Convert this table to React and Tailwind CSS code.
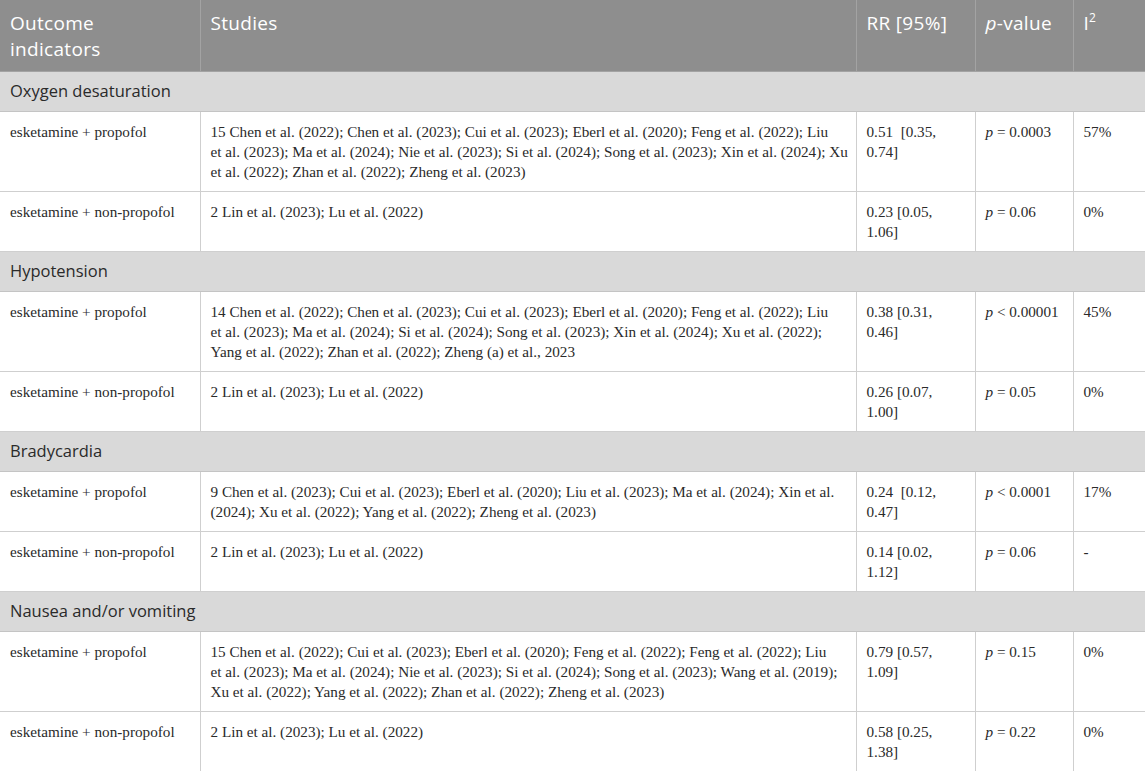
import React from "react";

const serif = { fontFamily: '"Liberation Serif", "Times New Roman", serif' };

const sections = [
  {
    title: "Oxygen desaturation",
    rows: [
      {
        a: "esketamine + propofol",
        s: [
          "15 Chen et al. (2022); Chen et al. (2023); Cui et al. (2023); Eberl et al. (2020); Feng et al. (2022); Liu",
          "et al. (2023); Ma et al. (2024); Nie et al. (2023); Si et al. (2024); Song et al. (2023); Xin et al. (2024); Xu",
          "et al. (2022); Zhan et al. (2022); Zheng et al. (2023)",
        ],
        rr: ["0.51\u00a0 [0.35,", "0.74]"],
        op: "=",
        p: "0.0003",
        i: "57%",
      },
      {
        a: "esketamine + non-propofol",
        s: ["2 Lin et al. (2023); Lu et al. (2022)"],
        rr: ["0.23 [0.05,", "1.06]"],
        op: "=",
        p: "0.06",
        i: "0%",
      },
    ],
  },
  {
    title: "Hypotension",
    rows: [
      {
        a: "esketamine + propofol",
        s: [
          "14 Chen et al. (2022); Chen et al. (2023); Cui et al. (2023); Eberl et al. (2020); Feng et al. (2022); Liu",
          "et al. (2023); Ma et al. (2024); Si et al. (2024); Song et al. (2023); Xin et al. (2024); Xu et al. (2022);",
          "Yang et al. (2022); Zhan et al. (2022); Zheng (a) et al., 2023",
        ],
        rr: ["0.38 [0.31,", "0.46]"],
        op: "<",
        p: "0.00001",
        i: "45%",
      },
      {
        a: "esketamine + non-propofol",
        s: ["2 Lin et al. (2023); Lu et al. (2022)"],
        rr: ["0.26 [0.07,", "1.00]"],
        op: "=",
        p: "0.05",
        i: "0%",
      },
    ],
  },
  {
    title: "Bradycardia",
    rows: [
      {
        a: "esketamine + propofol",
        s: [
          "9 Chen et al. (2023); Cui et al. (2023); Eberl et al. (2020); Liu et al. (2023); Ma et al. (2024); Xin et al.",
          "(2024); Xu et al. (2022); Yang et al. (2022); Zheng et al. (2023)",
        ],
        rr: ["0.24\u00a0 [0.12,", "0.47]"],
        op: "<",
        p: "0.0001",
        i: "17%",
      },
      {
        a: "esketamine + non-propofol",
        s: ["2 Lin et al. (2023); Lu et al. (2022)"],
        rr: ["0.14 [0.02,", "1.12]"],
        op: "=",
        p: "0.06",
        i: "-",
      },
    ],
  },
  {
    title: "Nausea and/or vomiting",
    rows: [
      {
        a: "esketamine + propofol",
        s: [
          "15 Chen et al. (2022); Cui et al. (2023); Eberl et al. (2020); Feng et al. (2022); Feng et al. (2022); Liu",
          "et al. (2023); Ma et al. (2024); Nie et al. (2023); Si et al. (2024); Song et al. (2023); Wang et al. (2019);",
          "Xu et al. (2022); Yang et al. (2022); Zhan et al. (2022); Zheng et al. (2023)",
        ],
        rr: ["0.79 [0.57,", "1.09]"],
        op: "=",
        p: "0.15",
        i: "0%",
      },
      {
        a: "esketamine + non-propofol",
        s: ["2 Lin et al. (2023); Lu et al. (2022)"],
        rr: ["0.58 [0.25,", "1.38]"],
        op: "=",
        p: "0.22",
        i: "0%",
      },
    ],
  },
];

function Lines({ lines }) {
  return lines.map((l, k) => (
    <div key={k} className="whitespace-pre">
      {l}
    </div>
  ));
}

export default function App() {
  const cell =
    "border border-[#cfcfcf] px-[10px] pt-[10px] pb-[9px] align-top text-[15.2px] leading-[20px] text-[#2a2a2a]";
  const head =
    "border border-[#a3a3a3] px-[10px] pt-[10px] align-top text-left font-normal text-[19px] leading-[26px] tracking-[0.3px] text-white";
  return (
    <div className="w-[1145px] h-[772px] bg-white overflow-hidden">
      <table
        className="w-[1145px] border-collapse table-fixed border-hidden"
        style={{ fontFamily: '"Open Sans", sans-serif' }}
      >
        <colgroup>
          <col className="w-[200px]" />
          <col className="w-[656px]" />
          <col className="w-[119px]" />
          <col className="w-[98px]" />
          <col className="w-[72px]" />
        </colgroup>
        <thead>
          <tr className="bg-[#8e8e8e] h-[71px]">
            <th className={head}>
              <div>Outcome</div>
              <div>indicators</div>
            </th>
            <th className={head}>Studies</th>
            <th className={head}>RR [95%]</th>
            <th className={head}>
              <i>p</i>-value
            </th>
            <th className={head}>
              I<sup className="text-[12px] top-[-0.7em]">2</sup>
            </th>
          </tr>
        </thead>
        <tbody>
          {sections.map((sec) => (
            <React.Fragment key={sec.title}>
              <tr className="bg-[#d9d9d9] h-[40px]">
                <td
                  colSpan={5}
                  className="border border-[#c4c4c4] px-[10px] align-middle text-[16.5px] leading-[20px] text-[#2a2a2a]"
                >
                  {sec.title}
                </td>
              </tr>
              {sec.rows.map((r, j) => (
                <tr key={j} style={serif}>
                  <td className={cell}>{r.a}</td>
                  <td className={cell}>
                    <Lines lines={r.s} />
                  </td>
                  <td className={cell}>
                    <Lines lines={r.rr} />
                  </td>
                  <td className={cell}>
                    <i>p</i>&nbsp;{r.op}&nbsp;{r.p}
                  </td>
                  <td className={cell}>{r.i}</td>
                </tr>
              ))}
            </React.Fragment>
          ))}
        </tbody>
      </table>
    </div>
  );
}
